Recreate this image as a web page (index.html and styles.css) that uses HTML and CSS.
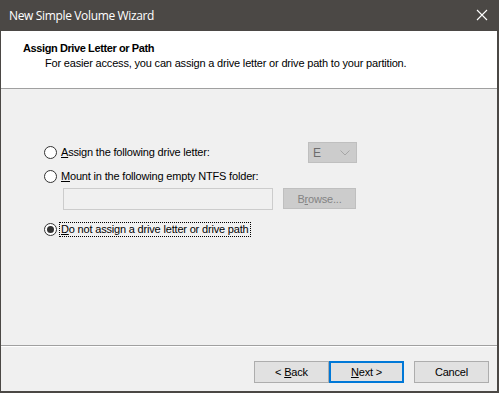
FILE: index.html
```html
<!DOCTYPE html>
<html lang="en">
<head>
  <meta charset="UTF-8" />
  <title>New Simple Volume Wizard</title>
  <link rel="stylesheet" href="styles.css">
</head>
<body>

<div class="window">
  <div class="titlebar">
    <span class="title">New Simple Volume Wizard</span>
    <svg class="close" width="12" height="12" viewBox="0 0 12 12">
      <path d="M1 1 L11 11 M11 1 L1 11" stroke="#fff" stroke-width="1.1" fill="none"/>
    </svg>
  </div>

  <div class="wizard-head">
    <div class="head-title">Assign Drive Letter or Path</div>
    <div class="head-sub">For easier access, you can assign a drive letter or drive path to your partition.</div>
  </div>

  <div class="content">
    <div class="row">
      <span class="radio"></span>
      <span class="label"><u>A</u>ssign the following drive letter:</span>
      <div class="combo">
        <span>E</span>
        <svg width="10" height="6" viewBox="0 0 10 6"><path d="M0.5 0.5 L5 5 L9.5 0.5" stroke="#a6a6a6" fill="none"/></svg>
      </div>
    </div>
    <div class="row row-mount">
      <span class="radio"></span>
      <span class="label"><u>M</u>ount in the following empty NTFS folder:</span>
    </div>
    <div class="folder-row">
      <div class="textbox"></div>
      <div class="btn btn-disabled"><span>B<u>r</u>owse...</span></div>
    </div>
    <div class="row row-none">
      <span class="radio checked"></span>
      <span class="label focus"><u>D</u>o not assign a drive letter or drive path</span>
    </div>
  </div>

  <div class="footer">
    <div class="btn"><span>&lt; <u>B</u>ack</span></div>
    <div class="btn btn-default"><span><u>N</u>ext &gt;</span></div>
    <div class="btn btn-cancel"><span>Cancel</span></div>
  </div>
</div>

</body>
</html>
```

FILE: styles.css
```css
body {
  margin: 0;
  background: #f0f0f0;
  font-family: 'Liberation Sans', Arial, sans-serif;
  font-size: 11px;
  letter-spacing: -0.18px;
  color: #000;
}

.window {
  width: 499px;
  height: 393px;
  box-sizing: border-box;
  border: 1px solid #4b4845;
  border-top: none;
  border-right-width: 2px;
  border-bottom-width: 2px;
  display: flex;
  flex-direction: column;
  background: #f0f0f0;
}

.titlebar {
  height: 31px;
  background: #4b4845;
  color: #fff;
  display: flex;
  align-items: center;
  justify-content: space-between;
  padding: 0 10px 0 9px;
  flex-shrink: 0;
  margin: 0 -2px 0 -1px;
}

.title {
  font-family: 'Open Sans', 'Noto Sans', sans-serif;
  font-size: 12px;
  letter-spacing: -0.35px;
  margin-top: -1px;
}

.close {
  margin-right: 1px;
  margin-top: -1px;
}

.wizard-head {
  background: #fff;
  height: 58px;
  border-bottom: 1px solid #a0a0a0;
  box-sizing: border-box;
  padding: 11px 0 0 22px;
  flex-shrink: 0;
}

.head-title {
  font-weight: bold;
  line-height: 13px;
  letter-spacing: -0.4px;
}

.head-sub {
  margin: 2px 0 0 22px;
  line-height: 13px;
}

.content {
  flex: 1;
  padding: 53px 0 0 43px;
  width: 313px;
}

.row {
  display: flex;
  align-items: center;
  height: 21px;
}

.radio {
  width: 13px;
  height: 13px;
  box-sizing: border-box;
  border: 1px solid #333;
  border-radius: 50%;
  background: #fff;
  margin-right: 4px;
  position: relative;
  flex-shrink: 0;
}

.radio.checked::after {
  content: "";
  position: absolute;
  left: 2px;
  top: 2px;
  width: 7px;
  height: 7px;
  border-radius: 50%;
  background: #333;
}

.label {
  line-height: 13px;
}

.label u {
  text-underline-offset: 1px;
}

.focus {
  outline: 1px dotted #000;
  outline-offset: 0;
  padding: 0 1px;
  margin-left: -1px;
}

.combo {
  margin-left: auto;
  width: 49px;
  height: 21px;
  box-sizing: border-box;
  background: #cccccc;
  border: 1px solid #bfbfbf;
  color: #6d6d6d;
  display: flex;
  align-items: center;
  justify-content: space-between;
  padding: 0 6px 0 4px;
  font-size: 12px;
}

.row-mount {
  margin-top: 3px;
}

.folder-row {
  display: flex;
  margin: 1px 0 0 19px;
  gap: 10px;
}

.textbox {
  width: 210px;
  height: 22px;
  box-sizing: border-box;
  background: #f0f0f0;
  border: 1px solid #cccccc;
}

.btn {
  width: 75px;
  height: 22px;
  box-sizing: border-box;
  background: #e1e1e1;
  border: 1px solid #adadad;
  display: flex;
  align-items: center;
  justify-content: center;
  font-family: 'Liberation Sans', Arial, sans-serif;
  font-size: 11px;
}

.btn-disabled {
  width: 73px;
  height: 21px;
  background: #cccccc;
  border-color: #bfbfbf;
  color: #838383;
}

.row-none {
  margin-top: 9px;
}

.footer {
  border-top: 1px solid #a0a0a0;
  box-shadow: inset 0 1px 0 #fff;
  height: 46px;
  box-sizing: border-box;
  flex-shrink: 0;
  display: flex;
  padding: 15px 0 0 253px;
}

.btn-default {
  border: 2px solid #0078d7;
}

.btn-cancel {
  margin-left: 10px;
}
```
